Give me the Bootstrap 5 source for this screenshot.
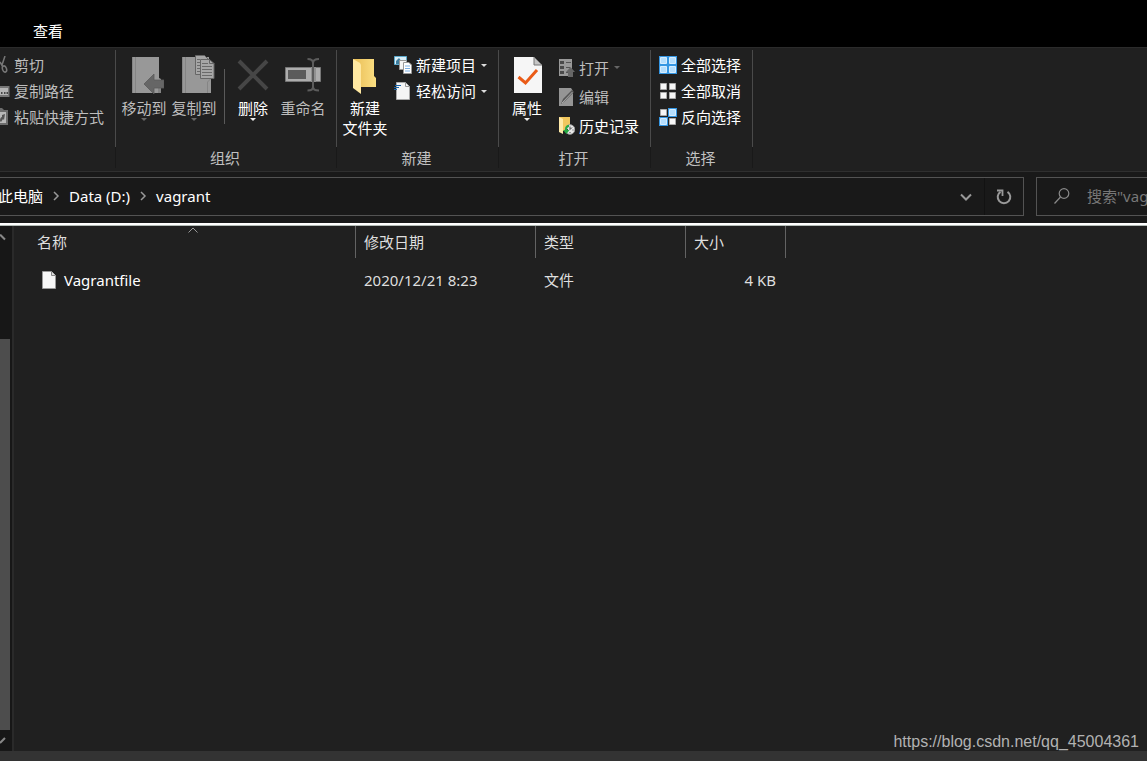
<!DOCTYPE html>
<html lang="zh-CN">
<head>
<meta charset="utf-8">
<meta name="viewport" content="width=device-width, initial-scale=1">
<title>vagrant</title>
<link href="https://cdn.jsdelivr.net/npm/bootstrap@5.3.0/dist/css/bootstrap.min.css" rel="stylesheet">
<style>
  body { background: #202020; color: #fff; font: 15px/20px "Noto Sans", "Noto Sans CJK SC", sans-serif; }
  .latin { font-size: 15px; font-family: "Noto Sans", "Noto Sans CJK SC", sans-serif; }
  button { background: none; border: 0; padding: 0; color: inherit; white-space: nowrap; }
  button:disabled, .dim { color: #bdbdbd; }
  svg { display: block; flex: none; }
  .tabs-bar { background: #000; height: 47px; padding: 16px 33px 0; }
  .tabs-bar button { height: 30px; }

  .ribbon { border-top: 1px solid #2b2b2b; border-bottom: 1px solid #2f2f2f; padding: 2px 0 3px; }
  .tool-body { height: 97px; border-right: 1px solid #4a4a4a; }
  .organise { padding: 0 8px 0 3px; }
  .tool-body.lead-gap { padding-left: 3px; }
  .tool-label { height: 21px; line-height: 22px; border-right: 1px solid #191919; color: #c0c0c0; text-align: center; padding-right: 2px; }
  .big { width: 50px; padding-top: 4px; display: flex; flex-direction: column; align-items: center; }
  .big .pic { margin-bottom: 4px; }
  .stack-sm { padding-top: 2px; margin-right: 11px; }
  .lead-gap .stack-sm { margin-left: 4px; }
  .stack-sm button { height: 26px; display: flex; align-items: center; gap: 4px; }
  .stack-sm.loose { padding-top: 3px; }
  .lead-gap .stack-sm.loose { margin-left: 6px; }
  .stack-sm.loose button { height: 29px; }
  .tick { margin-left: 1px; }
  .rule { width: 1px; height: 55px; margin: 19px 3px 0 5px; background: #5a5a5a; }

  .address { background: #191919; padding: 5px 0 7px; gap: 12px; }
  .box { border: 1px solid #535353; height: 39px; }
  .path { border-left: 0; overflow: hidden; }
  .crumbs { margin-left: -2px; padding-bottom: 1px; }
  .crumb-sep { width: 26px; padding-left: 10px; }
  .drop { width: 37px; border-right: 1px solid #121212; }
  .reload { width: 38px; }
  .drop svg, .reload svg { margin: auto; }
  .search { width: 111px; border-right: 0; padding: 0 0 1px 17px; overflow: hidden; gap: 17px; }
  .search input { background: none; border: 0; padding: 0; width: 110px; flex: none; outline: 0; color: #ccc; }
  .search input::placeholder { color: #777; opacity: 1; }
  .light-edge { height: 3px; background: #fff; border-bottom: 1px solid #b5bdb8; }

  .scroller { width: 14px; background: #171717; border-right: 2px solid #2a2a2a; }
  .thumb { width: 10px; background: #4d4d4d; }
  .up { height: 113px; padding-top: 8px; }
  .down { height: 21px; padding-top: 7px; }
  .files { width: 758px; table-layout: fixed; margin-left: 14px; color: #dedede; border-collapse: separate; border-spacing: 0; }
  .files th { height: 32px; padding: 0 8px; font-weight: 400; border-right: 1px solid #636363; position: relative; }
  .files td { height: 44px; padding: 0 8px; }
  .files th:first-child { padding-left: 9px; }
  .files td:last-child { text-align: right; padding-right: 10px; }
  .sort { position: absolute; top: 1px; left: 50%; margin-left: -4px; }
  .c-name { width: 328px; } .c-date { width: 180px; } .c-type { width: 150px; } .c-size { width: 100px; }
  .file-name { gap: 8px; padding-left: 6px; color: #fff; }
  .status { height: 10px; background: #333; }
  .credit { position: absolute; right: 8px; bottom: 9px; font: 16px/20px "Liberation Sans", sans-serif; color: #b2b2b2; }
</style>
</head>
<body class="d-flex flex-column min-vh-100 overflow-hidden">
<nav class="tabs-bar"><button type="button">查看</button></nav>

<section class="ribbon d-flex">
  <div>
    <div class="tool-body">
      <div class="stack-sm">
        <button type="button" disabled>
          <svg width="10" height="18"><path d="M5 0L2 9M0 6l3 5" stroke="#777" stroke-width="1.5" fill="none"/><ellipse cx="4.500" cy="13" rx="2" ry="3.200" transform="rotate(-20 4.500 13)" fill="none" stroke="#777" stroke-width="1.500"/></svg>剪切</button>
        <button type="button" disabled>
          <svg width="10" height="18"><path d="M0 4h9.500v11H0z" fill="#777"/><path d="M0 6h8v7H0z" fill="#b5b5b5"/><path d="M1 11h1.500M4 11h1.500M6.500 11H8" stroke="#222" stroke-width="1.500"/></svg>复制路径</button>
        <button type="button" disabled>
          <svg width="10" height="18"><path d="M0 0h2l2 2H8v15H0z" fill="#6c6c6c"/><path d="M0 4h6v11H0z" fill="#b8b8b8"/><path d="M0 13c0-3 1-4 2-4V7l3-1-1 6-1-1-2 3z" fill="#555"/></svg>粘贴快捷方式</button>
      </div>
    </div>
    <div class="tool-label"></div>
  </div>

  <div>
    <div class="tool-body organise d-flex align-items-start">
      <button class="big" type="button" disabled>
        <svg class="pic" width="40" height="40"><path d="M8 3h27v21l2 1v14H8z" fill="#989898"/><path d="M8.500 3v36M11.500 3v36" stroke="#858585"/><path d="M34 29h3v10h-3z" fill="#838383"/><path d="M20 30l10-10v6h10v8H30v6z" fill="#666" stroke="#5b5b5b" stroke-width=".8"/></svg>
        移动到<svg width="6" height="3"><path d="M0 0h6L3 3z" fill="#666"/></svg></button>
      <button class="big" type="button" disabled>
        <svg class="pic" width="41" height="40"><path d="M8 3h27v21l2 1v14H8z" fill="#989898"/><path d="M8.500 3v36M11.500 3v36M33.500 39V28l3-3" stroke="#858585" fill="none"/><g fill="#a6a6a6" stroke="#666"><path d="M21.500 1.500h9l4 4v15h-13z"/><path d="M26.500 5.500h9l4.500 4v15H26.500z"/></g><path d="M35.500 5.500v4h5" fill="none" stroke="#666"/><path d="M23 5.500h3M23 8.500h3M23 11.500h3M23 14.500h3M23 17.500h3M28 9.500h6M28 12.500h10M28 15.500h10M28 18.500h10M28 21.500h10" stroke="#6a6a6a"/></svg>
        复制到<svg width="6" height="3"><path d="M0 0h6L3 3z" fill="#666"/></svg></button>
      <span class="rule"></span>
      <button class="big" type="button">
        <svg class="pic" width="40" height="40"><path d="M6 7l28 28M34 7L6 35" stroke="#464646" stroke-width="4"/></svg>
        删除<svg width="6" height="3"><path d="M0 0h6L3 3z" fill="#eee"/></svg></button>
      <button class="big" type="button" disabled>
        <svg class="pic" width="40" height="40"><path d="M2.500 13.500h35v14h-35z" fill="#adadad" stroke="#777"/><path d="M5 16h18v9H5z" fill="#5b5b5b"/><path d="M28 13h5v15h-5z" fill="#909090"/><path d="M24.500 5c3 0 5.500 1 5.500 4v24c0 3-2.500 3.500-5.500 3.500M36 5c-3 0-6 1-6 4v24c0 3 3 3.500 6 3.500" fill="none" stroke="#5c5c5c" stroke-width="2"/></svg>
        重命名</button>
    </div>
    <div class="tool-label">组织</div>
  </div>

  <div>
    <div class="tool-body lead-gap d-flex align-items-start">
      <button class="big" type="button">
        <svg class="pic" width="40" height="40"><defs><linearGradient id="fold"><stop stop-color="#e9bd55"/><stop offset="1" stop-color="#fbdf83"/></linearGradient></defs><path d="M8 5h21v17l2 2v9H15z" fill="url(#fold)"/><path d="M8 5l7 4 1 2v29L8 34z" fill="#ffe8a1"/></svg>
        新建<br>文件夹</button>
      <div class="stack-sm">
        <button type="button">
          <svg width="18" height="18"><path d="M.5.500h12v8H.5z" fill="#d9eff9" stroke="#5ba9cc"/><path d="M2 5l3-3 3 4v2H2z" fill="#3d7d9e"/><path d="M5.500 4.500h7v9h-7z" fill="#f5f5f5" stroke="#999"/><path d="M9.500 6.500H15l2.500 2.500v8.500h-8z" fill="#fff" stroke="#999"/><path d="M11 10h5M11 12.500h5M11 15h5" stroke="#7aaee2"/></svg>新建项目<svg class="tick" width="6" height="3"><path d="M0 0h6L3 3z" fill="#ddd"/></svg></button>
        <button type="button">
          <svg width="18" height="18"><path d="M2.500.500h9l4 4v13h-13z" fill="#f5f5f5" stroke="#aaa"/><path d="M11.500.500v4h4" fill="none" stroke="#999"/><path d="M1 3.500h6M0 5.500h5M0 7.500h3" stroke="#1763a9" stroke-width="1.200"/></svg>轻松访问<svg class="tick" width="6" height="3"><path d="M0 0h6L3 3z" fill="#ddd"/></svg></button>
      </div>
    </div>
    <div class="tool-label">新建</div>
  </div>

  <div>
    <div class="tool-body lead-gap d-flex align-items-start">
      <button class="big" type="button">
        <svg class="pic" width="40" height="40"><path d="M7 3h20l8 8v28H7z" fill="#f6f6f6"/><path d="M27 3v8h8z" fill="#c5c5c5" stroke="#777"/><path d="M11.500 23l7 6L30 16" fill="none" stroke="#ea5b17" stroke-width="3"/></svg>
        属性<svg width="6" height="3"><path d="M0 0h6L3 3z" fill="#eee"/></svg></button>
      <div class="stack-sm loose">
        <button type="button" disabled>
          <svg width="17" height="18"><path d="M1 0h13v17H1z" fill="#999"/><path d="M2 2h4v3H2zM2 7h4v3H2zM2 12h4v3H2z" fill="#4a4a4a"/><path d="M8 3.500h5M8 8.500h4M8 13.500h2" stroke="#555"/><path d="M12.500 8l4.500 5h-2v5h-5v-5H8z" fill="#666"/></svg>打开<svg class="tick" width="6" height="3"><path d="M0 0h6L3 3z" fill="#666"/></svg></button>
        <button type="button" disabled>
          <svg width="17" height="18"><path d="M1 0h12l2 3v15H1z" fill="#959595"/><path d="M3 16l2-5L14 2l2 2-9 9z" fill="#555"/><path d="M4 15L14.500 4" stroke="#aaa"/></svg>编辑</button>
        <button type="button">
          <svg width="17" height="18"><path d="M1 0h11v14H3z" fill="#f1c75e"/><path d="M1 0l4 2v15l-4-2z" fill="#ffe9a8"/><circle cx="12" cy="12.500" r="4.800" fill="#e9e9e9" stroke="#999"/><path d="M12 9.500v3l2-2M9 12.500h1M14.500 13h1M12 15v1" stroke="#444" fill="none"/><path d="M11 8c-3 0-4 2-4 5H5l3.500 4 3-4H9c0-2 1-3 2-3z" fill="#27a943"/></svg>历史记录</button>
      </div>
    </div>
    <div class="tool-label">打开</div>
  </div>

  <div>
    <div class="tool-body d-flex align-items-start ps-2">
      <div class="stack-sm">
        <button type="button">
          <svg width="18" height="18"><path d="M0 0h18v18H0z" fill="#3496e3"/><path d="M1.500 1.500h6v6h-6zM10.500 1.500h6v6h-6zM1.500 10.500h6v6h-6zM10.500 10.500h6v6h-6z" fill="#b5defd" stroke="#d5edff"/></svg>全部选择</button>
        <button type="button">
          <svg width="18" height="18"><path d="M1.500 1.500h6v6h-6zM10.500 1.500h6v6h-6zM1.500 10.500h6v6h-6zM10.500 10.500h6v6h-6z" fill="#f7f7f7" stroke="#aaa"/></svg>全部取消</button>
        <button type="button">
          <svg width="18" height="18"><path d="M9 0h9v9H9zM0 9h9v9H0z" fill="#3496e3"/><path d="M10.500 1.500h6v6h-6zM1.500 10.500h6v6h-6z" fill="#b5defd" stroke="#d5edff"/><path d="M1.500 1.500h6v6h-6zM10.500 10.500h6v6h-6z" fill="#f7f7f7" stroke="#aaa"/></svg>反向选择</button>
      </div>
    </div>
    <div class="tool-label">选择</div>
  </div>
</section>

<section class="address d-flex">
  <div class="box path flex-grow-1 d-flex align-items-stretch">
    <div class="crumbs latin d-flex align-items-center flex-grow-1">
      <button type="button">此电脑</button>
      <svg class="crumb-sep" width="26" height="10"><path d="M1 1l4 4-4 4" fill="none" stroke="#999" stroke-width="1.500"/></svg>
      <button type="button">Data (D:)</button>
      <svg class="crumb-sep" width="26" height="10"><path d="M1 1l4 4-4 4" fill="none" stroke="#999" stroke-width="1.500"/></svg>
      <button type="button">vagrant</button>
    </div>
    <button class="drop" type="button" aria-label="展开"><svg width="12" height="8"><path d="M1 1.500l5 5 5-5" fill="none" stroke="#999" stroke-width="2"/></svg></button>
    <button class="reload" type="button" aria-label="刷新"><svg width="16" height="16"><path d="M11.500 2.800A6.300 6.300 0 1 1 4.500 2.800" fill="none" stroke="#999" stroke-width="2"/><path d="M1 1.500h5.500V7" fill="none" stroke="#999" stroke-width="1.800"/></svg></button>
  </div>
  <label class="box search d-flex align-items-center">
    <svg width="16" height="16"><circle cx="10" cy="5.500" r="4.800" fill="none" stroke="#8a8a8a" stroke-width="1.200"/><path d="M6.500 9L.5 15.500" stroke="#8a8a8a" stroke-width="1.200"/></svg>
    <input class="latin" type="text" placeholder="搜索&quot;vagrant&quot;" aria-label="搜索">
  </label>
</section>
<div class="light-edge"></div>

<main class="d-flex flex-grow-1">
  <div class="scroller d-flex flex-column">
    <div class="up"><svg width="6" height="7"><path d="M0 .5l5 5" stroke="#888" stroke-width="2"/></svg></div>
    <div class="thumb flex-grow-1"></div>
    <div class="down"><svg width="6" height="7"><path d="M0 6l5-5" stroke="#888" stroke-width="2"/></svg></div>
  </div>
  <div>
    <table class="files latin">
      <thead>
        <tr>
          <th class="c-name" scope="col">名称<svg class="sort" width="10" height="6"><path d="M.5 5.500L5 1l4.500 4.500" fill="none" stroke="#999"/></svg></th>
          <th class="c-date" scope="col">修改日期</th>
          <th class="c-type" scope="col">类型</th>
          <th class="c-size" scope="col">大小</th>
        </tr>
      </thead>
      <tbody>
        <tr>
          <td><div class="file-name d-flex align-items-center"><svg width="14" height="18"><path d="M.5.500h9l4 4v13H.5z" fill="#f7f7f7" stroke="#999"/><path d="M9.500.500v4h4" fill="#ddd" stroke="#888"/></svg>Vagrantfile</div></td>
          <td>2020/12/21 8:23</td>
          <td>文件</td>
          <td>4 KB</td>
        </tr>
      </tbody>
    </table>
  </div>
</main>
<footer class="status position-relative"><a class="credit text-decoration-none" href="https://blog.csdn.net/qq_45004361">https://blog.csdn.net/qq_45004361</a></footer>
<script src="https://cdn.jsdelivr.net/npm/bootstrap@5.3.0/dist/js/bootstrap.bundle.min.js"></script>
</body>
</html>
